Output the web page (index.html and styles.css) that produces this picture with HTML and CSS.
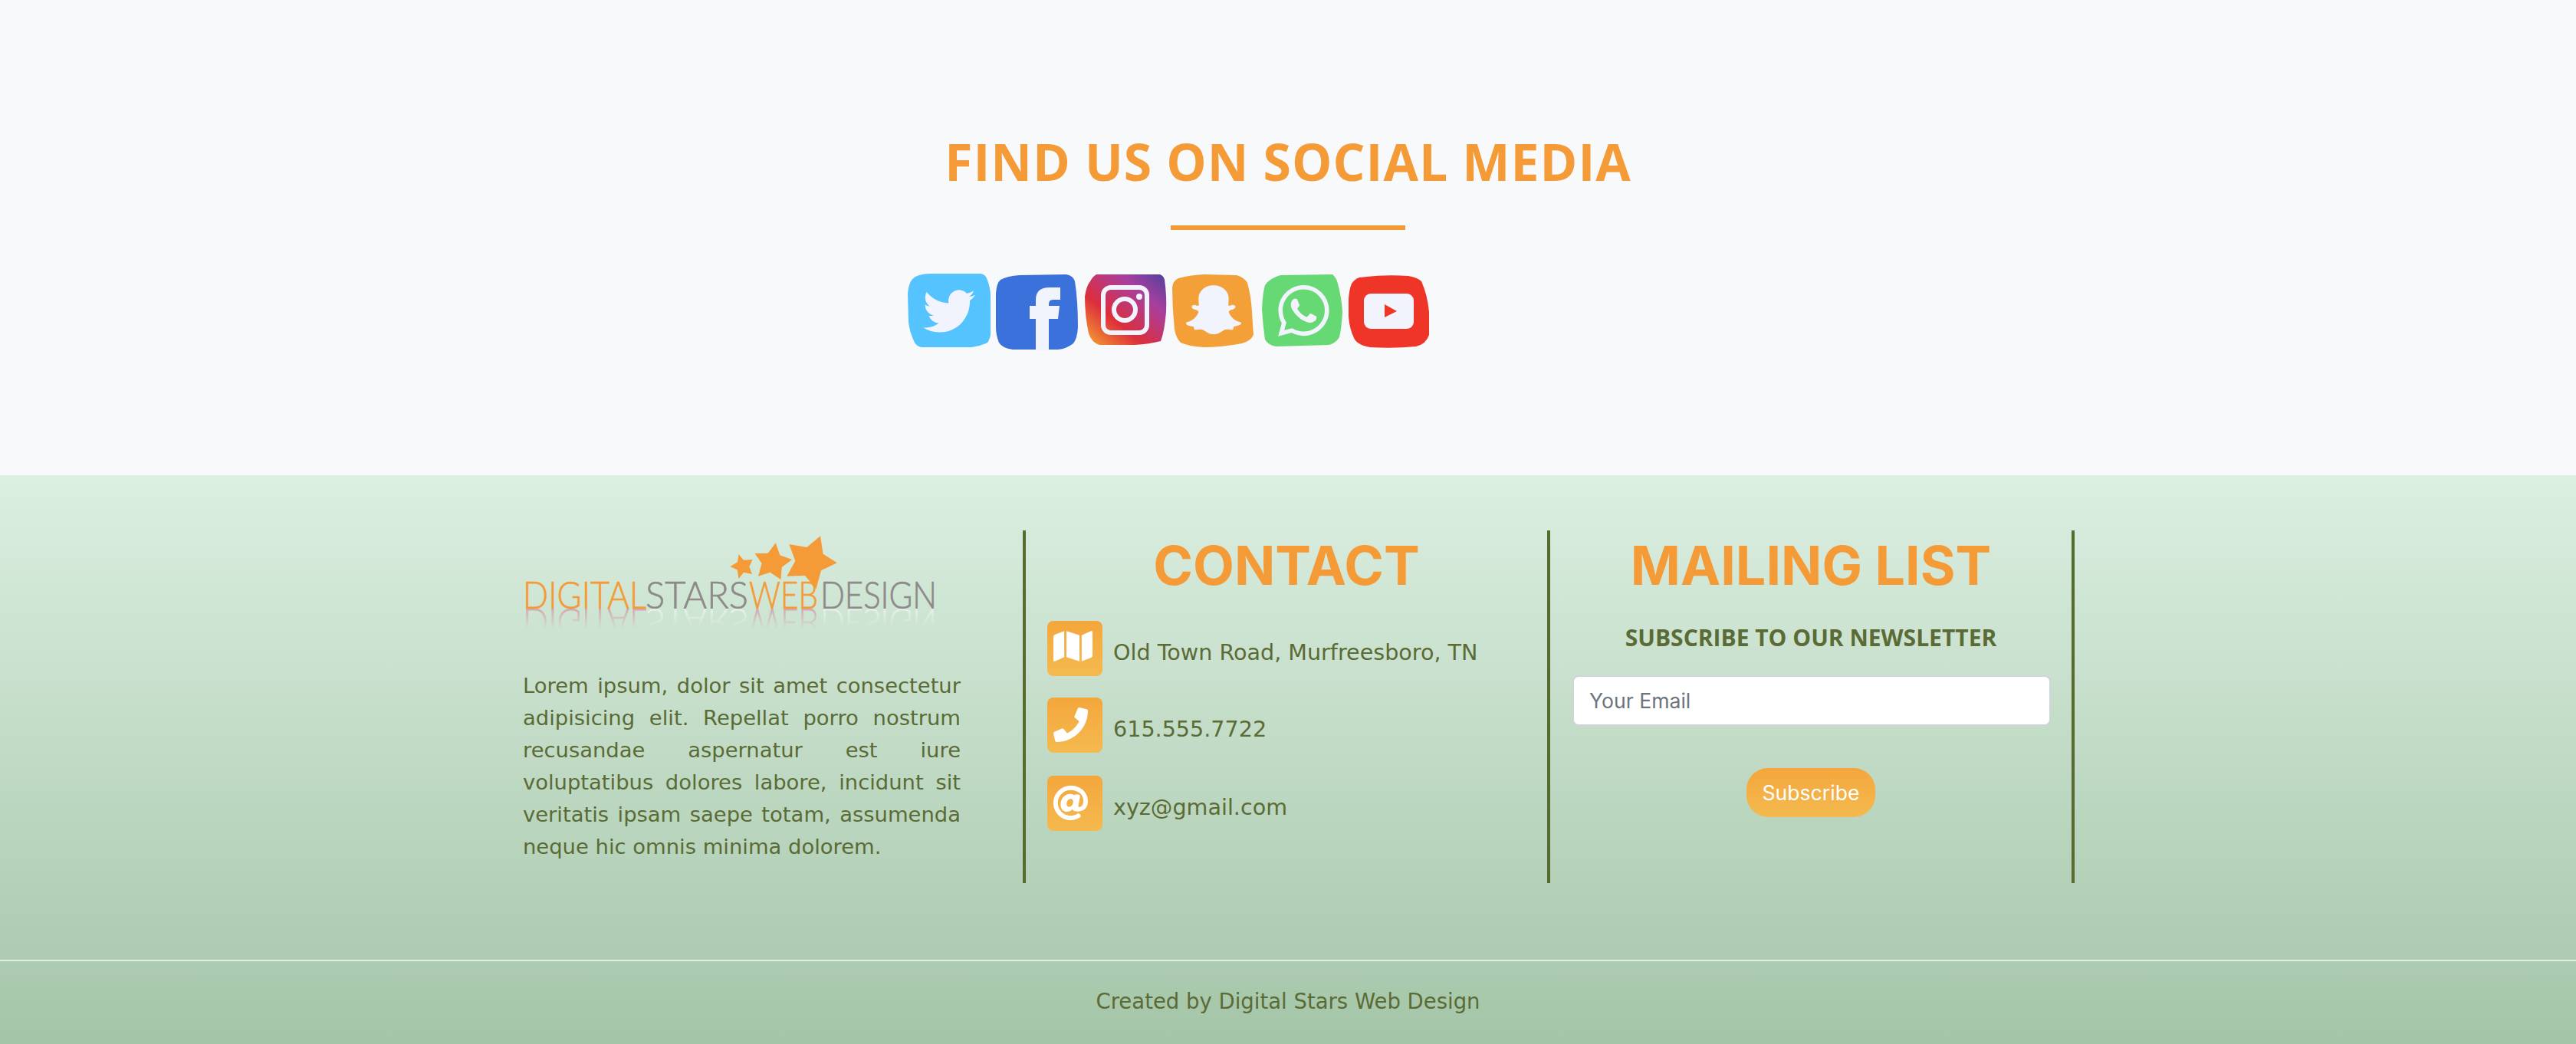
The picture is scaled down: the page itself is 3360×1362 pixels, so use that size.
FILE: index.html
```html
<!DOCTYPE html>
<html lang="en">
<head>
    <meta charset="UTF-8">
    <meta name="viewport" content="width=device-width, initial-scale=1.0">
    <title>Digital Stars Web Design</title>
    <link rel="stylesheet" href="styles.css">
</head>
<body>
    <section class="social">
        <h2 class="social-title">FIND US ON SOCIAL MEDIA</h2>
        <div class="social-rule"></div>
        <div class="social-icons">
            <svg class="social-icon" viewBox="0 0 108 100">
                <path class="blob-twitter" d="M0 27Q1 9 10 4Q18 0 30 0H95Q101 1 103 6Q108 18 108 30V80Q106 90 102 91Q90 96 78 96H18Q12 95 9 90Q2 75 1 63Z"/>
                <path class="glyph" transform="translate(20 15) scale(2.83)" d="M23.953 4.57a10 10 0 01-2.825.775 4.958 4.958 0 002.163-2.723c-.951.555-2.005.959-3.127 1.184a4.92 4.92 0 00-8.384 4.482C7.69 8.095 4.067 6.13 1.64 3.162a4.822 4.822 0 00-.666 2.475c0 1.71.87 3.213 2.188 4.096a4.904 4.904 0 01-2.228-.616v.06a4.923 4.923 0 003.946 4.827 4.996 4.996 0 01-2.212.085 4.936 4.936 0 004.604 3.417 9.867 9.867 0 01-6.102 2.105c-.39 0-.779-.023-1.17-.067a13.995 13.995 0 007.557 2.209c9.053 0 13.998-7.496 13.998-13.985 0-.21 0-.42-.015-.63A9.935 9.935 0 0024 4.59z"/>
            </svg>
            <svg class="social-icon" viewBox="0 0 108 100">
                <path class="blob-facebook" d="M0 26Q1 12 6 8Q15 3 31 2L92 1Q101 3 103 10Q107 35 107 70Q106 85 101 91Q92 98 81 99L22 99Q8 97 4 90Q0 80 0 70Z"/>
                <path class="glyph" d="M52 100V59H44V42H52V34Q52 18 70 18H84V34H74Q69 34 69 40V42H83L81 59H69V100Z"/>
            </svg>
            <svg class="social-icon" viewBox="0 0 108 100">
                <defs>
                    <linearGradient id="ig-fill" x1="0" y1="1" x2="1" y2="0">
                        <stop offset="0" stop-color="#f7a72e"/>
                        <stop offset=".36" stop-color="#dc2e3c"/>
                        <stop offset=".72" stop-color="#a83f9e"/>
                        <stop offset="1" stop-color="#50409c"/>
                    </linearGradient>
                </defs>
                <path fill="url(#ig-fill)" d="M1 30Q3 16 8 10Q11 4 16 1H99Q104 3 105 8Q108 30 107 50Q105 75 100 88Q85 92 66 93H20Q10 90 6 78Q1 55 1 30Z"/>
                <rect class="glyph-line" x="25" y="18" width="57" height="59" rx="10"/>
                <circle class="glyph-line" cx="53" cy="47" r="14"/>
                <circle class="glyph" cx="72" cy="30" r="4"/>
            </svg>
            <svg class="social-icon" viewBox="0 0 108 100">
                <path class="blob-snapchat" d="M0 18Q1 9 8 6Q22 2 41 1L84 2Q94 5 98 12Q103 30 104 50L106 80Q102 88 91 91Q65 96 41 96Q22 95 11 90Q5 84 3 73Q0 45 0 18Z"/>
                <path class="glyph" transform="translate(18 13) scale(3 2.85)" d="M12.206.793c.99 0 4.347.276 5.93 3.821.529 1.193.403 3.219.299 4.847l-.003.06c-.012.18-.022.345-.03.51.075.045.203.09.401.09.3-.016.659-.12 1.033-.301.165-.088.344-.104.464-.104.182 0 .359.029.509.09.45.149.734.479.734.838.015.449-.39.839-1.213 1.168-.089.029-.209.075-.344.119-.45.135-1.139.36-1.333.81-.09.224-.061.524.12.868l.015.015c.06.136 1.526 3.475 4.791 4.014.255.044.435.27.42.509 0 .075-.015.149-.045.225-.24.569-1.273.988-3.146 1.271-.059.091-.12.375-.164.57-.029.179-.074.36-.134.553-.076.271-.27.405-.555.405h-.03c-.135 0-.313-.031-.538-.074-.36-.075-.765-.135-1.273-.135-.3 0-.599.015-.913.074-.6.104-1.123.464-1.723.884-.853.599-1.826 1.288-3.294 1.288-.06 0-.119-.015-.18-.015h-.149c-1.468 0-2.427-.675-3.279-1.288-.599-.42-1.107-.779-1.707-.884-.314-.045-.629-.074-.928-.074-.54 0-.958.089-1.272.149-.211.043-.391.074-.54.074-.374 0-.523-.224-.583-.42-.061-.192-.09-.389-.135-.567-.046-.181-.105-.494-.166-.57-1.918-.222-2.95-.642-3.189-1.226-.031-.063-.052-.15-.055-.225-.015-.243.165-.465.42-.509 3.264-.54 4.73-3.879 4.791-4.02l.016-.029c.18-.345.224-.645.119-.869-.195-.434-.884-.658-1.332-.809-.121-.029-.24-.074-.346-.119-1.107-.435-1.257-.93-1.197-1.273.09-.479.674-.793 1.168-.793.146 0 .27.029.383.074.42.194.789.3 1.104.3.234 0 .384-.06.465-.105l-.046-.569c-.098-1.626-.225-3.651.307-4.837C7.392 1.077 10.739.807 11.727.807l.419-.015h.06z"/>
            </svg>
            <svg class="social-icon" viewBox="0 0 108 100">
                <path class="blob-whatsapp" d="M2 46Q3 25 6 15Q12 6 26 2L94 1Q99 5 101 13Q106 32 107 50Q106 70 103 83Q98 91 89 93L20 95Q10 93 6 86Q3 65 2 46Z"/>
                <path class="glyph" transform="translate(23 15) scale(2.78)" d="M17.472 14.382c-.297-.149-1.758-.867-2.03-.967-.273-.099-.471-.148-.67.15-.197.297-.767.966-.94 1.164-.173.199-.347.223-.644.075-.297-.15-1.255-.463-2.39-1.475-.883-.788-1.48-1.761-1.653-2.059-.173-.297-.018-.458.13-.606.134-.133.298-.347.446-.52.149-.174.198-.298.298-.497.099-.198.05-.371-.025-.52-.075-.149-.669-1.612-.916-2.207-.242-.579-.487-.5-.669-.51-.173-.008-.371-.01-.57-.01-.198 0-.52.074-.792.372-.272.297-1.04 1.016-1.04 2.479 0 1.462 1.065 2.875 1.213 3.074.149.198 2.096 3.2 5.077 4.487.709.306 1.262.489 1.694.625.712.227 1.36.195 1.871.118.571-.085 1.758-.719 2.006-1.413.248-.694.248-1.289.173-1.413-.074-.124-.272-.198-.57-.347m-5.421 7.403h-.004a9.87 9.87 0 01-5.031-1.378l-.361-.214-3.741.982.998-3.648-.235-.374a9.86 9.86 0 01-1.51-5.26c.001-5.45 4.436-9.884 9.888-9.884 2.64 0 5.122 1.03 6.988 2.898a9.825 9.825 0 012.893 6.994c-.003 5.45-4.437 9.884-9.885 9.884m8.413-18.297A11.815 11.815 0 0012.05 0C5.495 0 .16 5.335.157 11.892c0 2.096.547 4.142 1.588 5.945L.057 24l6.305-1.654a11.882 11.882 0 005.683 1.448h.005c6.554 0 11.89-5.335 11.893-11.893a11.821 11.821 0 00-3.48-8.413z"/>
            </svg>
            <svg class="social-icon" viewBox="0 0 108 100">
                <path class="blob-youtube" d="M0 33Q1 20 4 13Q8 7 14 5Q45 1 78 3Q90 5 95 10Q103 28 105 50V80Q101 92 88 95Q58 98 28 96Q14 94 8 86Q1 72 0 56Z"/>
                <rect class="glyph" x="20" y="26" width="65" height="46" rx="9"/>
                <path class="blob-youtube" d="M47 40L63 49L47 57Z"/>
            </svg>
        </div>
    </section>

    <footer class="footer">
        <div class="footer-columns">
            <div class="footer-col about">
                <svg class="logo" viewBox="0 0 560 130">
                    <defs>
                        <g id="logo-words">
                            <text class="logo-a" x="0" y="102" textLength="161" lengthAdjust="spacingAndGlyphs">DIGITAL</text>
                            <text class="logo-b" x="160" y="102" textLength="134" lengthAdjust="spacingAndGlyphs">STARS</text>
                            <text class="logo-a" x="295" y="102" textLength="90" lengthAdjust="spacingAndGlyphs">WEB</text>
                            <text class="logo-b" x="388" y="102" textLength="152" lengthAdjust="spacingAndGlyphs">DESIGN</text>
                        </g>
                        <linearGradient id="logo-fade" gradientUnits="userSpaceOnUse" x1="0" y1="102" x2="0" y2="128">
                            <stop offset="0" stop-color="#fff" stop-opacity=".6"/>
                            <stop offset="1" stop-color="#fff" stop-opacity="0"/>
                        </linearGradient>
                        <mask id="logo-mask" maskUnits="userSpaceOnUse" x="0" y="102" width="560" height="28">
                            <rect x="0" y="102" width="560" height="28" fill="url(#logo-fade)"/>
                        </mask>
                    </defs>
                    <g class="star">
                        <polygon points="388,7.3 391.6,30.7 409.8,42.3 389,52.3 382.5,76.3 368,59 344.4,59.7 355.3,39.7 347.3,18 370.5,22"/>
                        <polygon points="329.8,16.3 335.3,32.3 351,38 337.8,48 336.4,64 322.5,54.7 307,59.7 311.6,43 302.5,30 319.6,29.7"/>
                        <polygon points="281.5,31.3 288,38.7 299.6,38 295.3,47.3 299,57 288,54.7 281.5,63 279.6,51.3 270.2,47.3 280,41.3"/>
                    </g>
                    <use href="#logo-words"/>
                    <g mask="url(#logo-mask)">
                        <use class="logo-mirror" href="#logo-words" transform="translate(0 204) scale(1 -1)"/>
                    </g>
                </svg>
                <p class="about-text">Lorem ipsum, dolor sit amet consectetur adipisicing elit. Repellat porro nostrum recusandae aspernatur est iure voluptatibus dolores labore, incidunt sit veritatis ipsam saepe totam, assumenda neque hic omnis minima dolorem.</p>
            </div>

            <div class="footer-col contact">
                <h2 class="col-title">CONTACT</h2>
                <div class="contact-row">
                    <span class="contact-icon">
                        <svg class="icon-map" viewBox="0 32 576 448"><path d="M0 117.66v346.32c0 11.32 11.43 19.06 21.94 14.86L160 416V32L20.12 87.95A32.006 32.006 0 0 0 0 117.66zM192 416l192 64V96L192 32v384zM554.06 33.16L416 96v384l139.88-55.95A31.996 31.996 0 0 0 576 394.34V48.02c0-11.32-11.43-19.06-21.94-14.86z"/></svg>
                    </span>
                    <span class="contact-text">Old Town Road, Murfreesboro, TN</span>
                </div>
                <div class="contact-row">
                    <span class="contact-icon">
                        <svg class="icon-round" viewBox="0 0 512 512"><path d="M493.4 24.6l-104-24c-11.3-2.6-22.9 3.3-27.5 13.9l-48 112c-4.2 9.8-1.4 21.3 6.9 28l60.6 49.6c-36 76.7-98.9 140.5-177.2 177.2l-49.6-60.6c-6.8-8.3-18.2-11.1-28-6.9l-112 48C3.9 366.5-2 378.1.6 389.4l24 104C27.1 504.2 36.7 512 48 512c256.1 0 464-207.5 464-464 0-11.2-7.7-20.9-18.6-23.4z"/></svg>
                    </span>
                    <span class="contact-text">615.555.7722</span>
                </div>
                <div class="contact-row">
                    <span class="contact-icon">
                        <svg class="icon-round" viewBox="8 8 496 496"><path d="M256 8C118.941 8 8 118.919 8 256c0 137.059 110.919 248 248 248 48.154 0 95.342-14.14 135.408-40.223 12.005-7.815 14.625-24.288 5.552-35.372l-10.177-12.433c-7.671-9.371-21.179-11.667-31.373-5.129C325.92 429.757 291.314 440 256 440c-101.458 0-184-82.542-184-184S154.542 72 256 72c100.139 0 184 57.619 184 160 0 38.786-21.093 79.742-58.17 83.693-17.349-.454-16.91-12.857-13.476-30.024l23.433-121.11C394.653 149.75 383.308 136 368.225 136h-44.981a13.518 13.518 0 0 0-13.432 11.993l-.01.092c-14.697-17.901-40.448-21.775-59.971-21.775-74.58 0-137.831 62.234-137.831 151.46 0 65.303 36.785 105.87 96 105.87 26.984 0 57.369-15.637 74.991-38.333 9.522 34.104 40.613 34.103 70.71 34.103C462.609 379.41 504 307.798 504 232 504 95.653 394.023 8 256 8zm-21.68 304.43c-22.249 0-36.07-15.623-36.07-40.771 0-44.993 30.779-72.729 58.63-72.729 22.292 0 35.601 15.241 35.601 40.77 0 45.061-33.875 72.73-58.161 72.73z"/></svg>
                    </span>
                    <span class="contact-text">xyz@gmail.com</span>
                </div>
            </div>

            <div class="footer-col mailing">
                <h2 class="col-title">MAILING LIST</h2>
                <h5 class="mailing-sub">SUBSCRIBE TO OUR NEWSLETTER</h5>
                <input class="mailing-input" type="email" placeholder="Your Email">
                <button class="mailing-button">Subscribe</button>
            </div>
        </div>
        <div class="footer-bottom">Created by Digital Stars Web Design</div>
    </footer>
</body>
</html>
```

FILE: styles.css
```css
* {
    box-sizing: border-box;
}
body {
    margin: 0;
    font-family: "DejaVu Sans", sans-serif;
    color: #5a6b35;
    background-color: #f8f9fb;
}
.social {
    height: 620px;
    padding-top: 170px;
}
.social-title {
    margin: 0;
    font-family: "Open Sans", sans-serif;
    font-size: 66px;
    line-height: 80px;
    font-weight: 700;
    letter-spacing: 1px;
    text-align: center;
    color: #f49b37;
}
.social-rule {
    width: 306px;
    height: 6px;
    margin: 44px auto 0;
    background-color: #f49b37;
}
.social-icons {
    display: flex;
    gap: 7px;
    margin: 57px 0 0 1184px;
}
.social-icon {
    width: 108px;
    height: 100px;
    overflow: visible;
}
.glyph {
    fill: #f2f4fd;
}
.glyph-line {
    fill: none;
    stroke: #f2f4fd;
    stroke-width: 6;
}
.blob-twitter {
    fill: #55c3fd;
}
.blob-facebook {
    fill: #3b71db;
}
.blob-snapchat {
    fill: #f4a038;
}
.blob-whatsapp {
    fill: #66d975;
}
.blob-youtube {
    fill: #ee3527;
}

.footer {
    height: 742px;
    padding-top: 72px;
    background: linear-gradient(#dcefe1, #a4c5a8);
}
.footer-columns {
    display: flex;
    width: 2052px;
    height: 460px;
    margin: 0 auto;
}
.footer-col {
    width: 684px;
    padding: 0 28px;
    border-right: 4px solid #556b2f;
}
.about {
    padding-right: 81px;
}
.logo {
    display: block;
    width: 560px;
    height: 130px;
}
.star polygon {
    fill: #f49b37;
}
.logo text {
    font-family: Lato, sans-serif;
    font-weight: 300;
    font-size: 50px;
    stroke-width: .7px;
}
.logo-a {
    fill: var(--logo-orange, #f49b37);
    stroke: var(--logo-orange, #f49b37);
}
.logo-b {
    fill: var(--logo-grey, #8e8a8a);
    stroke: var(--logo-grey, #8e8a8a);
}
.logo-mirror {
    --logo-orange: #d9809a;
    --logo-grey: #f4f8f4;
}
.about-text {
    margin: 52px 0 0;
    font-size: 27.4px;
    line-height: 42px;
    text-align: justify;
}
.col-title {
    margin: 0;
    padding-top: 6px;
    font-family: Inter, sans-serif;
    font-size: 70px;
    line-height: 80px;
    font-weight: 700;
    text-align: center;
    color: #f49b37;
}
.contact-row {
    display: flex;
    align-items: flex-end;
    gap: 14px;
    margin-bottom: 28px;
}
.col-title + .contact-row {
    margin-top: 32px;
}
.contact-row:nth-child(3) {
    margin-bottom: 30px;
}
.contact-icon {
    display: flex;
    align-items: flex-start;
    width: 72px;
    height: 72px;
    padding: 13px 8px 0;
    border-radius: 8px;
    background: linear-gradient(#f4a63c, #f4ba4f);
}
.contact-icon svg {
    fill: #fff;
}
.icon-map {
    width: 51px;
    height: 40px;
}
.icon-round {
    width: 45px;
    height: 45px;
}
.contact-text {
    font-size: 28.6px;
    line-height: 36px;
    padding-bottom: 13px;
}
.mailing {
    text-align: center;
}
.mailing-sub {
    margin: 36px 0 0;
    font-family: "Open Sans", sans-serif;
    font-size: 30px;
    line-height: 36px;
    font-weight: 700;
}
.mailing-input {
    display: block;
    width: 624px;
    height: 66px;
    margin: 31px 0 0 1px;
    padding: 0 20px;
    border: 2px solid #ced4da;
    border-radius: 8px;
    background-color: #fff;
    font-family: Inter, sans-serif;
    font-size: 26.6px;
}
.mailing-input::placeholder {
    color: #6c757d;
    opacity: 1;
}
.mailing-button {
    display: block;
    width: 168px;
    height: 64px;
    margin: 55px auto 0;
    padding: 0;
    border: 0;
    border-radius: 28px;
    background: linear-gradient(#f4a63c, #f4ba4f);
    color: #fff;
    font-family: Inter, sans-serif;
    font-size: 26.6px;
}
.footer-bottom {
    margin-top: 100px;
    padding-top: 34px;
    border-top: 2px solid #e0ecdf;
    font-size: 27.5px;
    line-height: 36px;
    text-align: center;
}
```
